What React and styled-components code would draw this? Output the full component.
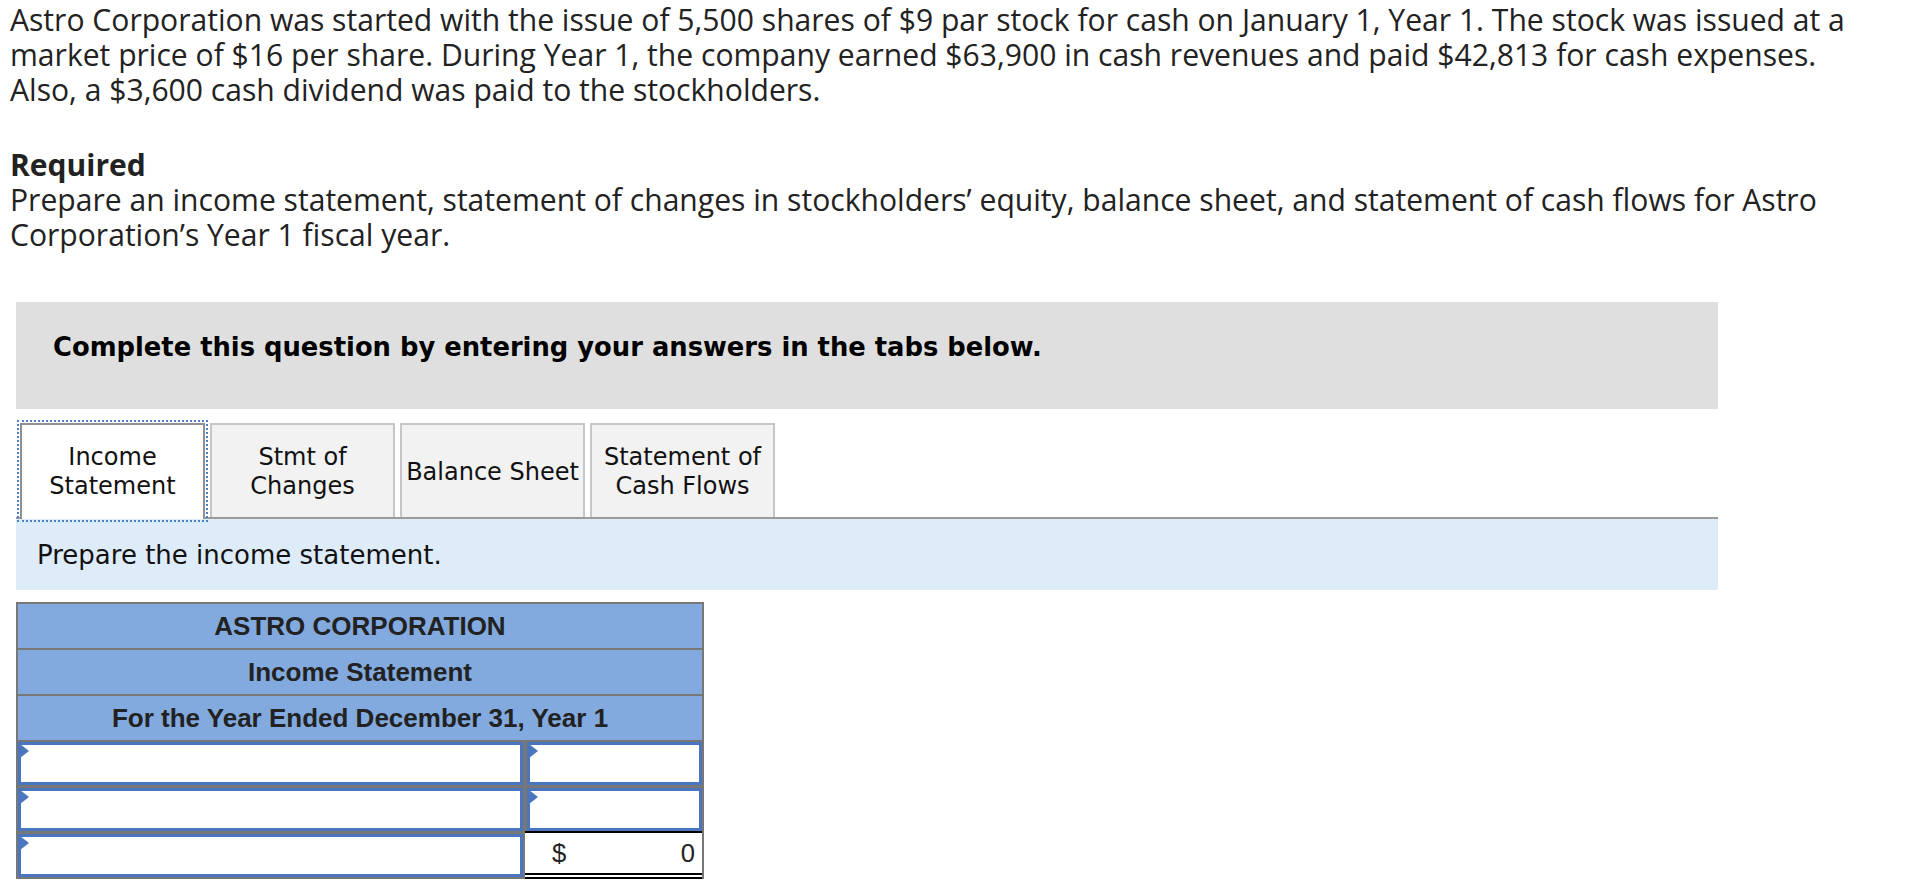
import React from "react";
import styled, { createGlobalStyle, css } from "styled-components";

const GlobalStyle = createGlobalStyle`
  html, body {
    margin: 0;
    padding: 0;
    background: #ffffff;
  }
  body {
    font-family: "Open Sans", "Liberation Sans", sans-serif;
    color: #222222;
  }
`;

const Page = styled.div`
  padding-top: 2px;
  width: 1926px;
`;

const Prose = styled.p`
  margin: 0;
  padding-left: 10px;
  font-family: "Open Sans", "Liberation Sans", sans-serif;
  font-size: 30.1px;
  line-height: 35px;
  color: #222222;
  white-space: nowrap;
`;

const RequiredBlock = styled.div`
  margin-top: 40px;
`;

const RequiredTitle = styled.div`
  padding-left: 10px;
  font-family: "Open Sans", "Liberation Sans", sans-serif;
  font-size: 30px;
  line-height: 35px;
  font-weight: 700;
  color: #222222;
`;

const Widget = styled.section`
  margin: 50px 0 0 16px;
  width: 1702px;
`;

const Banner = styled.div`
  box-sizing: border-box;
  height: 107px;
  padding: 30px 37px 0;
  background: #dfdfdf;
  font-family: "DejaVu Sans", Verdana, sans-serif;
  font-weight: 700;
  font-size: 25.8px;
  line-height: 30px;
  color: #000000;
`;

const TabBar = styled.div`
  display: flex;
  align-items: flex-end;
  gap: 5px;
  margin-top: 14px;
  padding-left: 4px;
  border-bottom: 2px solid #9a9a9a;
`;

const Tab = styled.button`
  box-sizing: border-box;
  width: 185px;
  height: 94px;
  padding: 2px 2px 0;
  border: 2px solid #c6c6c6;
  border-bottom: none;
  background: #f2f2f2;
  display: flex;
  align-items: center;
  justify-content: center;
  text-align: center;
  font-family: "DejaVu Sans", Verdana, sans-serif;
  font-size: 24px;
  line-height: 29px;
  color: #111111;
  cursor: pointer;

  ${(p) =>
    p.$active &&
    css`
      background: #ffffff;
      border-color: #8f8f8f;
      height: 96px;
      margin-bottom: -2px;
      padding-bottom: 2px;
      outline: 2px dotted #4f7fc9;
      outline-offset: 1px;
    `}
`;

const InfoBar = styled.div`
  box-sizing: border-box;
  height: 71px;
  padding-left: 21px;
  display: flex;
  align-items: center;
  background: #deebf8;
  font-family: "DejaVu Sans", Verdana, sans-serif;
  font-size: 26px;
  color: #111111;
`;

const Sheet = styled.div`
  box-sizing: border-box;
  width: 688px;
  margin-top: 12px;
  border: 2px solid #777777;
  background: #777777;
  font-family: "Liberation Sans", Arial, sans-serif;
`;

const HeaderRow = styled.div`
  height: 44px;
  margin-bottom: 2px;
  display: flex;
  align-items: center;
  justify-content: center;
  background: #82aadf;
  font-weight: 700;
  font-size: 26px;
  color: #222222;
`;

const Inputs = styled.div`
  display: grid;
  row-gap: 3px;
`;

const InputRow = styled.div`
  display: grid;
  grid-template-columns: 1fr 175px;
  column-gap: 4px;
  height: 43px;
`;

const InputBox = styled.div`
  position: relative;
  box-sizing: border-box;
  height: 43px;
  background: #ffffff;
  border: 3px solid #4a76c0;

  &::before {
    content: "";
    position: absolute;
    left: -1px;
    top: -1px;
    width: 0;
    height: 0;
    border-left: 9px solid #4a76c0;
    border-top: 7px solid transparent;
    border-bottom: 7px solid transparent;
  }
`;

const TotalCell = styled.div`
  box-sizing: border-box;
  margin: -3px 0 -2px -2px;
  height: 48px;
  padding: 0 7px 0 27px;
  display: flex;
  align-items: center;
  justify-content: space-between;
  background: #ffffff;
  border-top: 2px solid #000000;
  border-bottom: 6px double #000000;
  font-size: 25.6px;
  color: #222222;
`;

const tabs = [
  { id: "is", label: ["Income", "Statement"] },
  { id: "sc", label: ["Stmt of", "Changes"] },
  { id: "bs", label: ["Balance Sheet"] },
  { id: "cf", label: ["Statement of", "Cash Flows"] },
];

export default function App() {
  return (
    <>
      <GlobalStyle />
      <Page>
        <Prose>
          Astro Corporation was started with the issue of 5,500 shares of $9 par stock for cash on January 1, Year 1. The stock was issued at a
          <br />
          market price of $16 per share. During Year 1, the company earned $63,900 in cash revenues and paid $42,813 for cash expenses.
          <br />
          Also, a $3,600 cash dividend was paid to the stockholders.
        </Prose>
        <RequiredBlock>
          <RequiredTitle>Required</RequiredTitle>
          <Prose>
            Prepare an income statement, statement of changes in stockholders’ equity, balance sheet, and statement of cash flows for Astro
            <br />
            Corporation’s Year 1 fiscal year.
          </Prose>
        </RequiredBlock>

        <Widget>
          <Banner>Complete this question by entering your answers in the tabs below.</Banner>
          <TabBar>
            {tabs.map((t, i) => (
              <Tab key={t.id} $active={i === 0}>
                <span>
                  {t.label.map((l, j) => (
                    <React.Fragment key={j}>
                      {j > 0 && <br />}
                      {l}
                    </React.Fragment>
                  ))}
                </span>
              </Tab>
            ))}
          </TabBar>
          <InfoBar>Prepare the income statement.</InfoBar>

          <Sheet>
            <HeaderRow>ASTRO CORPORATION</HeaderRow>
            <HeaderRow>Income Statement</HeaderRow>
            <HeaderRow>For the Year Ended December 31, Year 1</HeaderRow>
            <Inputs>
              <InputRow>
                <InputBox />
                <InputBox />
              </InputRow>
              <InputRow>
                <InputBox />
                <InputBox />
              </InputRow>
              <InputRow>
                <InputBox />
                <TotalCell>
                  <span>$</span>
                  <span>0</span>
                </TotalCell>
              </InputRow>
            </Inputs>
          </Sheet>
        </Widget>
      </Page>
    </>
  );
}
